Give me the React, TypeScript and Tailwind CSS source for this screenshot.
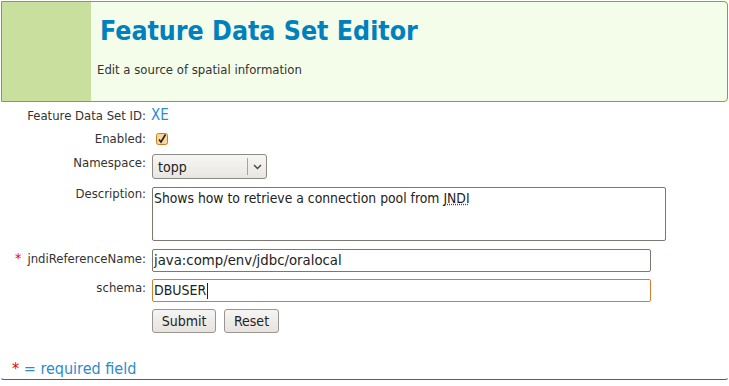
import React from "react";

const F = { fontFamily: '"DejaVu Sans Condensed", "DejaVu Sans", sans-serif' };
const W = { fontFamily: '"DejaVu Sans", sans-serif' };

function Label({ children, req }: { children: React.ReactNode; req?: boolean }) {
  return (
    <div className="w-[146px] shrink-0 pr-[1px] text-right text-[13px] leading-[15px] text-[#333]">
      {req && <span className="mr-[6px] text-[14px] text-[#e00]">*</span>}
      {children}
    </div>
  );
}

export default function App() {
  return (
    <div className="w-[729px] h-[386px] bg-white" style={F}>
      <div className="ml-px mr-px mt-px flex h-[101px] rounded-tr-[4px] rounded-br-[4px] border border-[#76ac2d] bg-[#f4fdea]">
        <div className="w-[89px] shrink-0 bg-[#c8df9d]" />
        <div className="flex flex-col pl-[6px]">
          <div className="mt-[13px] pl-[3px] text-[26.5px] font-bold leading-[32px] text-[#0080bd]">
            Feature Data Set Editor
          </div>
          <div className="mt-[15px] text-[13px] leading-[16px] text-[#333]">
            Edit a source of spatial information
          </div>
        </div>
      </div>
      <div className="h-[278px] rounded-b-[4px] border-b border-x border-b-[#1f6e9c] border-x-transparent flex flex-col">
        <div className="mt-[4px] flex items-center h-[18px]">
          <Label>Feature Data Set ID:</Label>
          <div className="ml-[4px] text-[15px] leading-[18px] text-[#2a8ccc]">XE</div>
        </div>
        <div className="mt-[5px] flex items-center h-[18px]">
          <Label>Enabled:</Label>
          <div className="ml-[9px] pt-[1px]">
            <svg width="12" height="12" viewBox="0 0 12 12">
              <rect x="0.5" y="0.5" width="11" height="11" rx="2" fill="#fbd59a" stroke="#c8801e" />
              <path d="M3 6.5 L5 9 L9.5 1.5" fill="none" stroke="#222" strokeWidth="1.6" />
            </svg>
          </div>
        </div>
        <div className="mt-[7px] flex items-start">
          <div className="pt-[1px]"><Label>Namespace:</Label></div>
          <div className="ml-[5px] flex h-[25px] w-[115px] items-center rounded-[3px] border border-[#8d8983] bg-gradient-to-b from-[#f7f6f4] to-[#e9e6e2]">
            <div className="flex-1 pl-[5px] pt-[2px] text-[14px] text-[#222]">topp</div>
            <div className="h-[17px] w-px bg-[#a6a29c]" />
            <div className="flex w-[18px] items-center justify-center">
              <svg width="9" height="6" viewBox="0 0 9 6">
                <path d="M1 1 L4.5 4.5 L8 1" fill="none" stroke="#444" strokeWidth="1.4" />
              </svg>
            </div>
          </div>
        </div>
        <div className="mt-[8px] flex items-start">
          <div className="-mt-[1px]"><Label>Description:</Label></div>
          <div className="ml-[5px] h-[54px] w-[514px] rounded-[2px] border border-[#7c776f] px-[1px] pt-[2px] text-[13.8px] leading-[16px] text-[#222]">
            Shows how to retrieve a connection pool from{" "}
            <span className="underline decoration-dotted decoration-[#e00]">JNDI</span>
          </div>
        </div>
        <div className="mt-[8px] flex items-start">
          <div className="pt-[2px]"><Label req>jndiReferenceName:</Label></div>
          <div className="ml-[5px] flex h-[23px] w-[499px] items-center rounded-[2px] border border-[#7c776f] px-[1px] pt-[1px] text-[13.3px] text-[#222]" style={W}>
            java:comp/env/jdbc/oralocal
          </div>
        </div>
        <div className="mt-[7px] flex items-start">
          <div className="pt-[1px]"><Label>schema:</Label></div>
          <div className="ml-[5px] flex h-[23px] w-[499px] items-center rounded-[2px] border border-[#cf7f2c] px-[1px] text-[14px] text-[#222]">
            DBUSER<span className="ml-px inline-block h-[16px] w-px bg-[#222]" />
          </div>
        </div>
        <div className="mt-[7px] flex gap-[8px] pl-[151px]">
          <div className="flex h-[24px] w-[64px] items-center justify-center rounded-[3px] border border-[#9a958e] bg-gradient-to-b from-[#f6f5f3] to-[#e6e3df] text-[14px] text-[#222]">
            Submit
          </div>
          <div className="flex h-[24px] w-[55px] items-center justify-center rounded-[3px] border border-[#9a958e] bg-gradient-to-b from-[#f6f5f3] to-[#e6e3df] text-[14px] text-[#222]">
            Reset
          </div>
        </div>
        <div className="mt-auto mb-[1px] pl-[11px] text-[16px] leading-[18px] text-[#2a8ccc]">
          <span className="text-[#e00]">*</span> = required field
        </div>
      </div>
    </div>
  );
}
